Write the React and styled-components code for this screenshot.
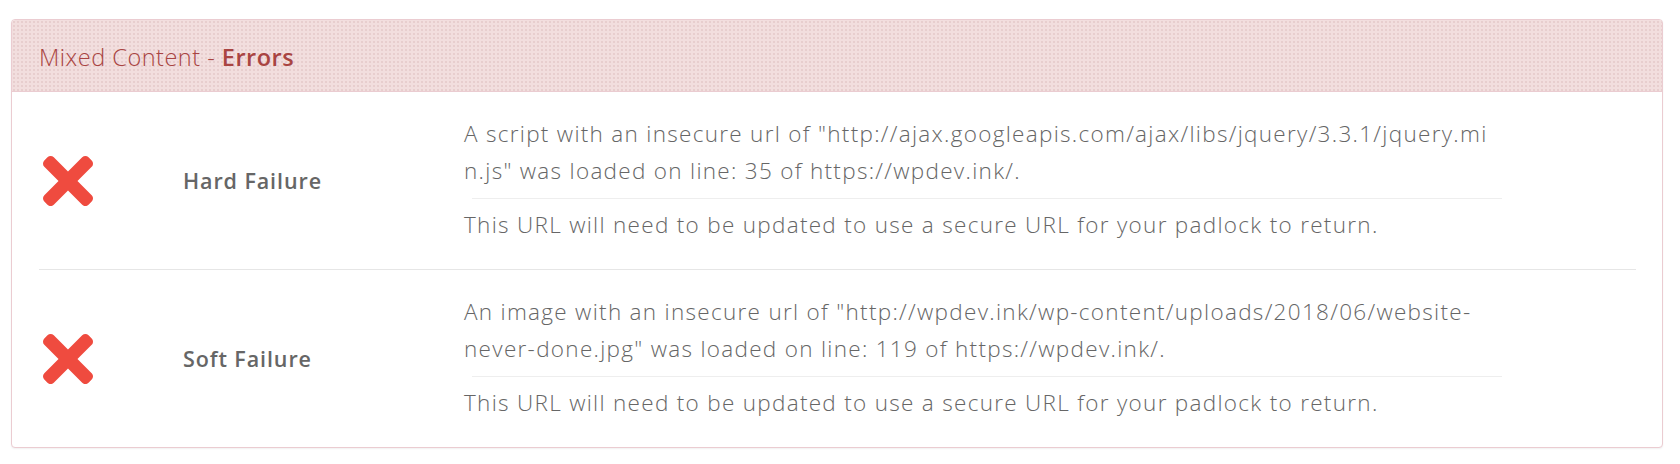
import React from "react";
import styled, { createGlobalStyle } from "styled-components";

const Global = createGlobalStyle`
  body {
    margin: 0;
    background: #fff;
    font-family: "Open Sans", "Lato", "Liberation Sans", sans-serif;
  }
`;

const Page = styled.div`
  padding: 19px 17px 16px 11px;
`;

const Panel = styled.div`
  border: 1px solid #ebccd1;
  border-radius: 4px;
  background: #fff;
  box-shadow: 0 1px 2px rgba(0, 0, 0, 0.06);
  overflow: hidden;
`;

const Header = styled.div`
  padding: 23px 25px 20px 27px;
  background-color: #f2dede;
  background-image: radial-gradient(
    rgba(190, 140, 140, 0.2) 0.7px,
    transparent 0.9px
  );
  background-size: 4px 4px;
  border-bottom: 1px solid #ebccd1;
  color: #a94442;
  font-size: 23.5px;
  line-height: 28px;
  font-weight: 300;
  letter-spacing: 0.5px;
  b {
    font-weight: 600;
  }
`;

const Body = styled.div`
  padding: 0 26px 0 27px;
`;

const Row = styled.div`
  display: grid;
  grid-template-columns: 144px 281px 1fr;
  align-items: center;
  border-bottom: 1px solid #e6e6e6;
  &:last-child {
    border-bottom: none;
  }
`;

const IconCell = styled.div`
  padding-left: 4px;
  display: flex;
  align-items: center;
  svg {
    display: block;
    width: 50px;
    height: 50px;
    fill: #ef4b3f;
  }
`;

const Label = styled.div`
  color: #666;
  font-size: 21.5px;
  font-weight: 600;
  letter-spacing: 0.9px;
`;

const Desc = styled.div`
  padding: 23px 0 26px;
  width: 1047px;
  color: #666;
  font-size: 22.5px;
  font-weight: 300;
  line-height: 37px;
  letter-spacing: 1.3px;
`;

const Line = styled.div`
  white-space: nowrap;
`;

const Rule = styled.hr`
  margin: 9px 9px 7px 8px;
  border: 0;
  border-top: 1px solid #eee;
`;

const CrossIcon = () => (
  <svg viewBox="0 80 352 352">
    <path d="M242.72 256l100.07-100.07c12.28-12.28 12.28-32.19 0-44.48l-22.24-22.24c-12.28-12.28-32.19-12.28-44.48 0L176 189.28 75.93 89.21c-12.28-12.28-32.19-12.28-44.48 0L9.21 111.45c-12.28 12.28-12.28 32.19 0 44.48L109.28 256 9.21 356.07c-12.28 12.28-12.28 32.19 0 44.48l22.24 22.24c12.28 12.28 32.2 12.28 44.48 0L176 322.72l100.07 100.07c12.28 12.28 32.2 12.28 44.48 0l22.24-22.24c12.28-12.28 12.28-32.19 0-44.48L242.72 256z" />
  </svg>
);

const errors = [
  {
    label: "Hard Failure",
    lines: [
      'A script with an insecure url of "http://ajax.googleapis.com/ajax/libs/jquery/3.3.1/jquery.mi',
      'n.js" was loaded on line: 35 of https://wpdev.ink/.',
    ],
  },
  {
    label: "Soft Failure",
    lines: [
      'An image with an insecure url of "http://wpdev.ink/wp-content/uploads/2018/06/website-',
      'never-done.jpg" was loaded on line: 119 of https://wpdev.ink/.',
    ],
  },
];

export default function App() {
  return (
    <Page>
      <Global />
      <Panel>
        <Header>
          Mixed Content - <b>Errors</b>
        </Header>
        <Body>
          {errors.map((e, i) => (
            <Row key={i}>
              <IconCell>
                <CrossIcon />
              </IconCell>
              <Label>{e.label}</Label>
              <Desc>
                {e.lines.map((l, j) => (
                  <Line key={j}>{l}</Line>
                ))}
                <Rule />
                <Line>
                  This URL will need to be updated to use a secure URL for your
                  padlock to return.
                </Line>
              </Desc>
            </Row>
          ))}
        </Body>
      </Panel>
    </Page>
  );
}
